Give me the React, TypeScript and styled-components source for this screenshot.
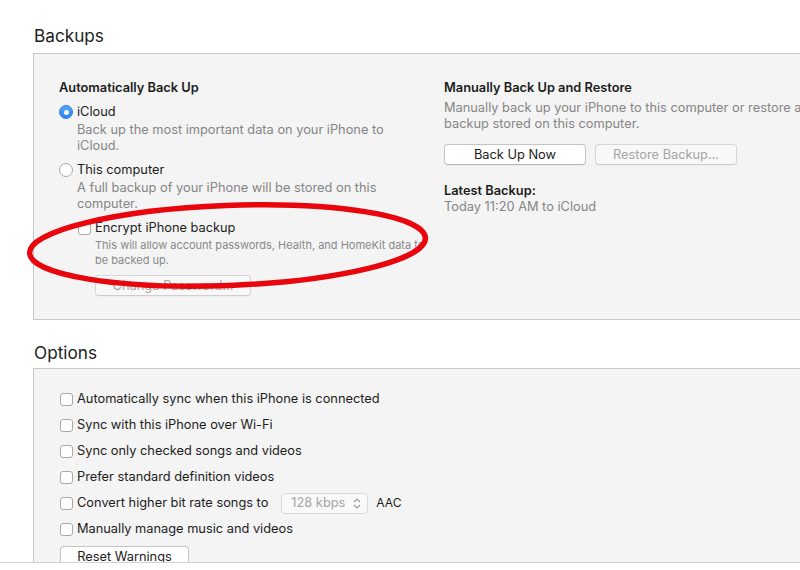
import styled, { createGlobalStyle } from "styled-components";

const GlobalStyle = createGlobalStyle`
  html, body {
    margin: 0;
    padding: 0;
    background: #fff;
  }
  body {
    font-family: Inter, Roboto, "Liberation Sans", sans-serif;
    font-size: 12.8px;
    color: #1c1c1c;
    -webkit-font-smoothing: antialiased;
  }
`;

const Page = styled.div`
  position: relative;
  width: 800px;
  height: 563px;
  overflow: hidden;
  border-bottom: 1px solid #d2d2d2;
  display: flex;
  flex-direction: column;
  padding-left: 33px;
  box-sizing: border-box;
`;

const SectionTitle = styled.h2<{ $top: number }>`
  margin: ${(p) => p.$top}px 0 0 1px;
  font-size: 17.2px;
  font-weight: 400;
  line-height: 22px;
  height: 22px;
  color: #1c1c1c;
`;

const Panel = styled.div<{ $grow?: boolean }>`
  margin-top: ${(p) => (p.$grow ? 4 : 6)}px;
  background: #f4f4f4;
  border: 1px solid #c9c9c9;
  border-right: none;
  ${(p) => (p.$grow ? "flex: 1; border-bottom: none;" : "")}
`;

const BackupGrid = styled.div`
  display: grid;
  grid-template-columns: 385px 1fr;
  padding: 26px 0 24px 25px;
  height: 265px;
  box-sizing: border-box;
`;

const Column = styled.div`
  display: flex;
  flex-direction: column;
  min-width: 0;
`;

const Heading = styled.div`
  font-weight: 600;
  line-height: 16px;
`;

const Choice = styled.label<{ $gap?: number }>`
  display: flex;
  align-items: center;
  gap: 4px;
  line-height: 16px;
  margin-top: ${(p) => p.$gap ?? 8}px;
`;

const Radio = styled.span<{ $on?: boolean }>`
  width: 14px;
  height: 14px;
  box-sizing: border-box;
  border-radius: 50%;
  flex-shrink: 0;
  display: flex;
  align-items: center;
  justify-content: center;
  background: ${(p) => (p.$on ? "linear-gradient(#5aa4fb, #2a83f4)" : "#fff")};
  border: 1px solid ${(p) => (p.$on ? "#2a7ee9" : "#a8a8a8")};
  &::after {
    content: "";
    display: ${(p) => (p.$on ? "block" : "none")};
    width: 5px;
    height: 5px;
    border-radius: 50%;
    background: #fff;
  }
`;

const Box = styled.span`
  width: 13px;
  height: 13px;
  box-sizing: border-box;
  border: 1px solid #a9a9a9;
  border-radius: 3px;
  background: #fff;
  flex-shrink: 0;
`;

const Description = styled.div<{ $small?: boolean; $indent: number }>`
  margin-left: ${(p) => p.$indent}px;
  margin-top: 2px;
  color: ${(p) => (p.$small ? "#888" : "#858585")};
  font-size: ${(p) => (p.$small ? 11 : 12.8)}px;
  line-height: ${(p) => (p.$small ? 15 : 16)}px;
  max-width: ${(p) => (p.$small ? 335 : 318)}px;
`;

const Indented = styled.div`
  margin-left: 19px;
  display: flex;
  flex-direction: column;
`;

const Button = styled.button<{ $width: number; $top?: number; $off?: boolean }>`
  width: ${(p) => p.$width}px;
  height: 21px;
  margin-top: ${(p) => p.$top ?? 0}px;
  padding: 0;
  font-family: inherit;
  font-size: 12.8px;
  color: ${(p) => (p.$off ? "#a5a5a5" : "#1c1c1c")};
  background: ${(p) => (p.$off ? "#f8f8f8" : "#fff")};
  border: 1px solid ${(p) => (p.$off ? "#d6d6d6" : "#c4c4c4")};
  border-bottom-color: ${(p) => (p.$off ? "#cfcfcf" : "#b4b4b4")};
  border-radius: 4px;
  box-shadow: 0 0.5px 0.5px rgba(0, 0, 0, 0.06);
  text-align: center;
  flex-shrink: 0;
`;

const ButtonRow = styled.div`
  display: flex;
  gap: 9px;
  margin-top: 12px;
`;

const Info = styled.div<{ $top: number; $muted?: boolean; $bold?: boolean }>`
  margin-top: ${(p) => p.$top}px;
  line-height: 16px;
  color: ${(p) => (p.$muted ? "#858585" : "#1c1c1c")};
  font-weight: ${(p) => (p.$bold ? 600 : 400)};
  white-space: nowrap;
`;

const OptionList = styled.div`
  display: flex;
  flex-direction: column;
  gap: 10px;
  padding: 22px 0 0 26px;
`;

const Option = styled.label`
  display: flex;
  align-items: center;
  gap: 4px;
  height: 16px;
  line-height: 16px;
  white-space: nowrap;
`;

const Popup = styled.span`
  margin-left: 9px;
  height: 21px;
  width: 87px;
  box-sizing: border-box;
  display: flex;
  align-items: center;
  justify-content: space-between;
  padding: 0 6px 0 9px;
  border: 1px solid #d8d8d8;
  border-radius: 4px;
  background: #f9f9f9;
  color: #a5a5a5;
`;

const Suffix = styled.span`
  margin-left: 4px;
  font-size: 12px;
`;

const Overlay = styled.svg`
  position: absolute;
  left: 0;
  top: 0;
  pointer-events: none;
`;

const options = [
  "Automatically sync when this iPhone is connected",
  "Sync with this iPhone over Wi-Fi",
  "Sync only checked songs and videos",
  "Prefer standard definition videos",
];

function Chevrons() {
  return (
    <svg width="8" height="11" viewBox="0 0 8 11" fill="none" stroke="#9a9a9a" strokeWidth="1.1">
      <path d="M1 4 L4 1 L7 4" />
      <path d="M1 7 L4 10 L7 7" />
    </svg>
  );
}

export default function App() {
  return (
    <>
      <GlobalStyle />
      <Page>
        <SectionTitle $top={25}>Backups</SectionTitle>
        <Panel>
          <BackupGrid>
            <Column>
              <Heading>Automatically Back Up</Heading>
              <Choice>
                <Radio $on />
                iCloud
              </Choice>
              <Description $indent={18}>
                Back up the most important data on your iPhone to iCloud.
              </Description>
              <Choice>
                <Radio />
                This computer
              </Choice>
              <Description $indent={18}>
                A full backup of your iPhone will be stored on this computer.
              </Description>
              <Indented>
                <Choice>
                  <Box />
                  Encrypt iPhone backup
                </Choice>
                <Description $small $indent={17}>
                  This will allow account passwords, Health, and HomeKit data to be backed up.
                </Description>
                <Button $width={156} $top={7} $off style={{ marginLeft: 17 }}>
                  Change Password...
                </Button>
              </Indented>
            </Column>
            <Column>
              <Heading>Manually Back Up and Restore</Heading>
              <Info $top={4} $muted>
                Manually back up your iPhone to this computer or restore a
                <br />
                backup stored on this computer.
              </Info>
              <ButtonRow>
                <Button $width={142}>Back Up Now</Button>
                <Button $width={142} $off>
                  Restore Backup...
                </Button>
              </ButtonRow>
              <Info $top={18} $bold>
                Latest Backup:
              </Info>
              <Info $top={0} $muted>
                Today 11:20 AM to iCloud
              </Info>
            </Column>
          </BackupGrid>
        </Panel>
        <SectionTitle $top={22}>Options</SectionTitle>
        <Panel $grow>
          <OptionList>
            {options.map((o) => (
              <Option key={o}>
                <Box />
                {o}
              </Option>
            ))}
            <Option>
              <Box />
              Convert higher bit rate songs to
              <Popup>
                128 kbps
                <Chevrons />
              </Popup>
              <Suffix>AAC</Suffix>
            </Option>
            <Option>
              <Box />
              Manually manage music and videos
            </Option>
            <Button $width={129} $top={-1}>
              Reset Warnings
            </Button>
          </OptionList>
        </Panel>
        <Overlay width="800" height="570">
          <ellipse
            cx="227.5"
            cy="245.5"
            rx="198"
            ry="40"
            transform="rotate(-2.2 227.5 245.5)"
            fill="none"
            stroke="#e8050c"
            strokeWidth="5.5"
          />
        </Overlay>
      </Page>
    </>
  );
}
